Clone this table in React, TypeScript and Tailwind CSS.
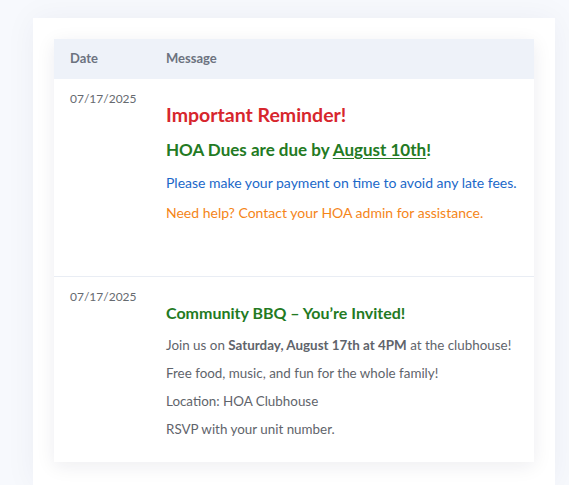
export default function App() {
  return (
    <div className="min-h-screen bg-[#f7f9fd] pl-[33px] pr-[14px] pt-[18px] font-['Lato','Noto_Sans',sans-serif]">
      <div className="bg-white p-[21px] pb-[24px] shadow-[0_0_30px_rgba(30,40,80,0.05)]">
        <div className="bg-white shadow-[0_4px_18px_rgba(20,30,60,0.08)]">
          <div className="grid h-10 grid-cols-[112px_1fr] items-center bg-[#eef2f9] text-[13px] font-bold text-[#6c7280]">
            <div className="pl-4">Date</div>
            <div>Message</div>
          </div>

          <div className="grid grid-cols-[112px_1fr] border-b border-[#e9edf4] pb-[53px] pt-[10px]">
            <div className="pl-4 text-[12px] leading-5 text-[#666a70]">07/17/2025</div>
            <div className="pt-[14px]">
              <div className="text-[19.5px] font-bold leading-6 text-[#d7262d]">Important Reminder!</div>
              <div className="mt-[11px] text-[17px] font-bold leading-6 text-[#237a23]">
                HOA Dues are due by <span className="underline underline-offset-2">August 10th</span>!
              </div>
              <div className="mt-[11px] text-[14px] leading-5 text-[#1b68c9]">
                Please make your payment on time to avoid any late fees.
              </div>
              <div className="mt-[10px] text-[14px] leading-5 text-[#f58518]">
                Need help? Contact your HOA admin for assistance.
              </div>
            </div>
          </div>

          <div className="grid grid-cols-[112px_1fr] pb-[23px] pt-[10px]">
            <div className="pl-4 text-[12px] leading-5 text-[#666a70]">07/17/2025</div>
            <div className="pt-[15px] text-[13.4px] leading-5 text-[#5f646b]">
              <div className="text-[16px] font-bold leading-[22px] text-[#237a23]">
                Community BBQ – You’re Invited!
              </div>
              <div className="mt-[11px]">
                Join us on <span className="font-bold">Saturday, August 17th at 4PM</span> at the clubhouse!
              </div>
              <div className="mt-2">Free food, music, and fun for the whole family!</div>
              <div className="mt-2">Location: HOA Clubhouse</div>
              <div className="mt-2">RSVP with your unit number.</div>
            </div>
          </div>
        </div>
      </div>
    </div>
  );
}
